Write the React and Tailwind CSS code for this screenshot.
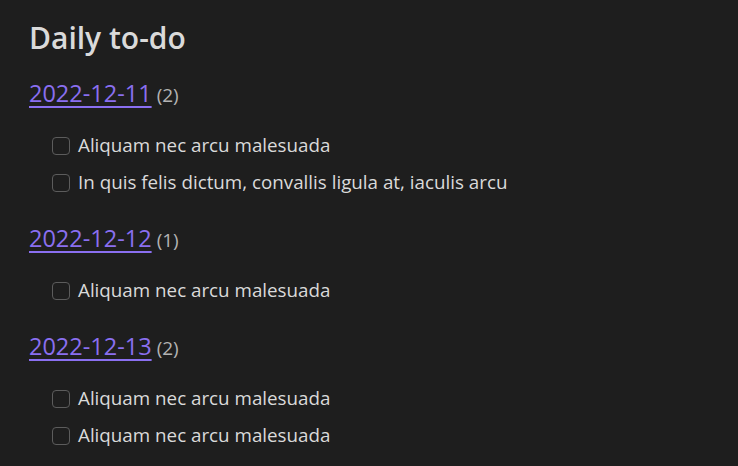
// Daily to-do — lista de tareas agrupadas por día

const grupos = [
  { fecha: '2022-12-11', tareas: ['Aliquam nec arcu malesuada', 'In quis felis dictum, convallis ligula at, iaculis arcu'] },
  { fecha: '2022-12-12', tareas: ['Aliquam nec arcu malesuada'] },
  { fecha: '2022-12-13', tareas: ['Aliquam nec arcu malesuada', 'Aliquam nec arcu malesuada'] },
];

function Tarea({ texto }) {
  return (
    <li className="flex items-center h-[37px] pl-[23px]">
      <span className="w-[18px] h-[18px] rounded-[4px] border border-[#5c5c5c] shrink-0" />
      <span className="ml-[8px] text-[18.8px] text-[#dadada]">{texto}</span>
    </li>
  );
}

export default function App() {
  return (
    <div
      className="w-[738px] h-[466px] bg-[#1e1e1e] overflow-hidden px-[29px] pt-[18px]"
      style={{ fontFamily: '"Open Sans", "Noto Sans", sans-serif' }}
    >
      <h2 className="h-[40px] leading-[40px] text-[30px] font-semibold text-[#dadada]">Daily to-do</h2>
      {grupos.map((g, i) => (
        <section key={g.fecha} className={i === 0 ? 'mt-[20px]' : 'mt-[22px]'}>
          <div className="h-[30px] leading-[30px] flex items-baseline">
            <a className="text-[23.5px] text-[#8a6ff0] underline decoration-[2px] underline-offset-[4px]">{g.fecha}</a>
            <span className="ml-[5px] text-[19px] text-[#b3b3b3]">({g.tareas.length})</span>
          </div>
          <ul className="mt-[19px]">
            {g.tareas.map((t, j) => (
              <Tarea key={j} texto={t} />
            ))}
          </ul>
        </section>
      ))}
    </div>
  );
}
